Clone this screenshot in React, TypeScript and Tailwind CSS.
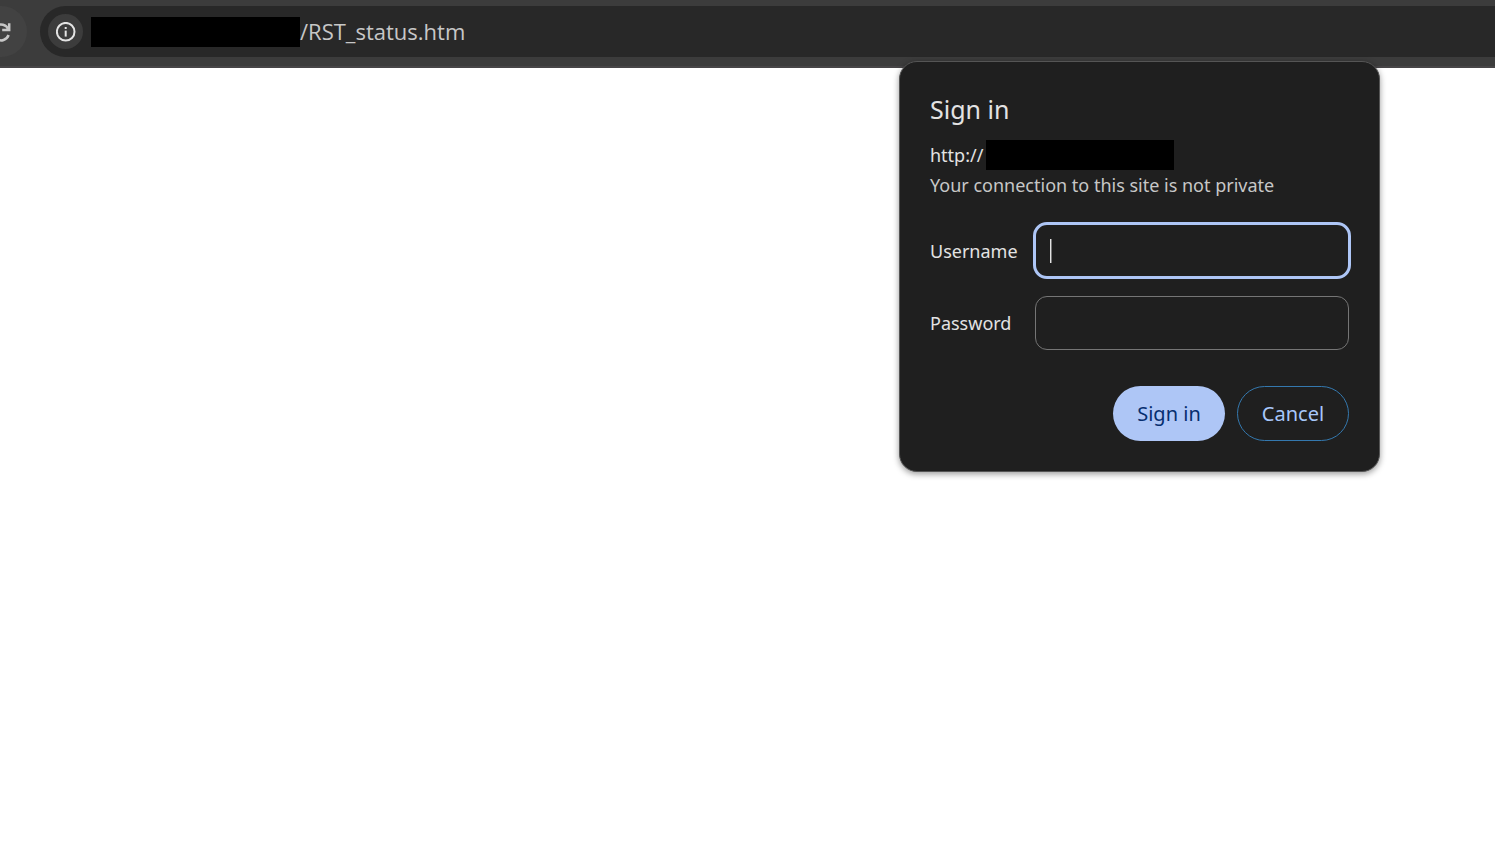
import type { InputHTMLAttributes } from 'react';

function ReloadIcon() {
  return (
    <svg viewBox="0 0 24 24" className="size-6" fill="none" stroke="#c7c7c7" strokeWidth="2.5" aria-hidden="true">
      <path d="M18.6 15A7.9 7.9 0 1 1 18.4 9.4" />
      <path d="M19.2 3.2v6.9h-7" />
    </svg>
  );
}

function InfoIcon() {
  return (
    <svg viewBox="0 0 20 20" className="size-5" fill="none" stroke="#e3e3e3" aria-hidden="true">
      <circle cx="9.7" cy="9.7" r="8.8" strokeWidth="2" />
      <path d="M9.7 8.6v6" strokeWidth="2" />
      <path d="M9.7 5v2" strokeWidth="2" />
    </svg>
  );
}

function Toolbar() {
  return (
    <header className="flex items-start gap-[13px] overflow-hidden border-b-2 border-[#474547] bg-[#3c3c3c] pt-1.5 pb-[9px]">
      <button
        type="button"
        aria-label="Reload"
        className="-ml-6 flex size-[51px] shrink-0 items-center justify-center rounded-full bg-[#424242]"
      >
        <ReloadIcon />
      </button>
      <div className="flex h-[51px] flex-1 items-center rounded-l-full bg-[#282828] pl-2">
        <button
          type="button"
          aria-label="View site information"
          className="mr-2 flex size-[35px] shrink-0 items-center justify-center rounded-full bg-[#3c3c3c]"
        >
          <InfoIcon />
        </button>
        <span className="h-[30px] w-[209px] shrink-0 bg-black" />
        <span className="pb-0.5 font-['Open_Sans','Noto_Sans',sans-serif] text-[22px] leading-7 text-[#c7c7c7]">/RST_status.htm</span>
      </div>
    </header>
  );
}

function Field({ id, label, active, ...rest }: { id: string; label: string; active?: boolean } & InputHTMLAttributes<HTMLInputElement>) {
  return (
    <div className="flex items-center">
      <label htmlFor={id} className="w-[105px] shrink-0 text-[18px] leading-6 text-[#e3e3e3]">
        {label}
      </label>
      <div className="relative flex-1">
        <input
          id={id}
          {...rest}
          className={
            active
              ? '-mx-0.5 -mt-0.5 -mb-px block h-[57px] w-[calc(100%+4px)] rounded-[14px] border-3 border-[#aec6f6] bg-transparent px-4 text-[18px] text-[#e3e3e3] caret-transparent outline-none'
              : 'block h-[54px] w-full rounded-xl border border-[#757575] bg-transparent px-4 text-[18px] text-[#e3e3e3] outline-none'
          }
        />
        {active && <span className="absolute top-[15px] left-[15px] h-6 w-0.5 border-l border-[#e3e3e3] bg-[#777777]" />}
      </div>
    </div>
  );
}

function SignInDialog() {
  return (
    <form
      role="dialog"
      aria-labelledby="title"
      onSubmit={(e) => e.preventDefault()}
      className="absolute top-[61px] right-[115px] w-[481px] rounded-[18px] border border-[#555555] bg-[#1f1f1f] px-[30px] pt-[29px] pb-[30px] shadow-[0_2px_6px_rgba(0,0,0,0.4)]"
    >
      <h1 id="title" className="text-[25px] leading-9 text-[#e3e3e3]">Sign in</h1>
      <div className="mt-[13px] flex items-center text-[18px] leading-[30px] text-[#e3e3e3]">
        <span className="w-[56px]">http://</span>
        <span className="h-[30px] w-[188px] bg-black" />
      </div>
      <p className="text-[18px] leading-[30px] whitespace-nowrap text-[#c7c7c7]">Your connection to this site is not private</p>
      <div className="mt-6 flex flex-col gap-[18px]">
        <Field id="username" label="Username" type="text" active />
        <Field id="password" label="Password" type="password" />
      </div>
      <div className="mt-9 flex justify-end gap-3">
        <button type="submit" className="h-[55px] w-28 rounded-full bg-[#aec6f6] text-[20px] text-[#062e6f]">
          Sign in
        </button>
        <button type="button" className="h-[55px] w-28 rounded-full border border-[#3478ae] text-[20px] text-[#a8c7fa]">
          Cancel
        </button>
      </div>
    </form>
  );
}

export default function App() {
  return (
    <div className="relative min-h-screen overflow-hidden bg-white font-['Noto_Sans','Open_Sans',sans-serif]">
      <Toolbar />
      <main>
        <SignInDialog />
      </main>
    </div>
  );
}
